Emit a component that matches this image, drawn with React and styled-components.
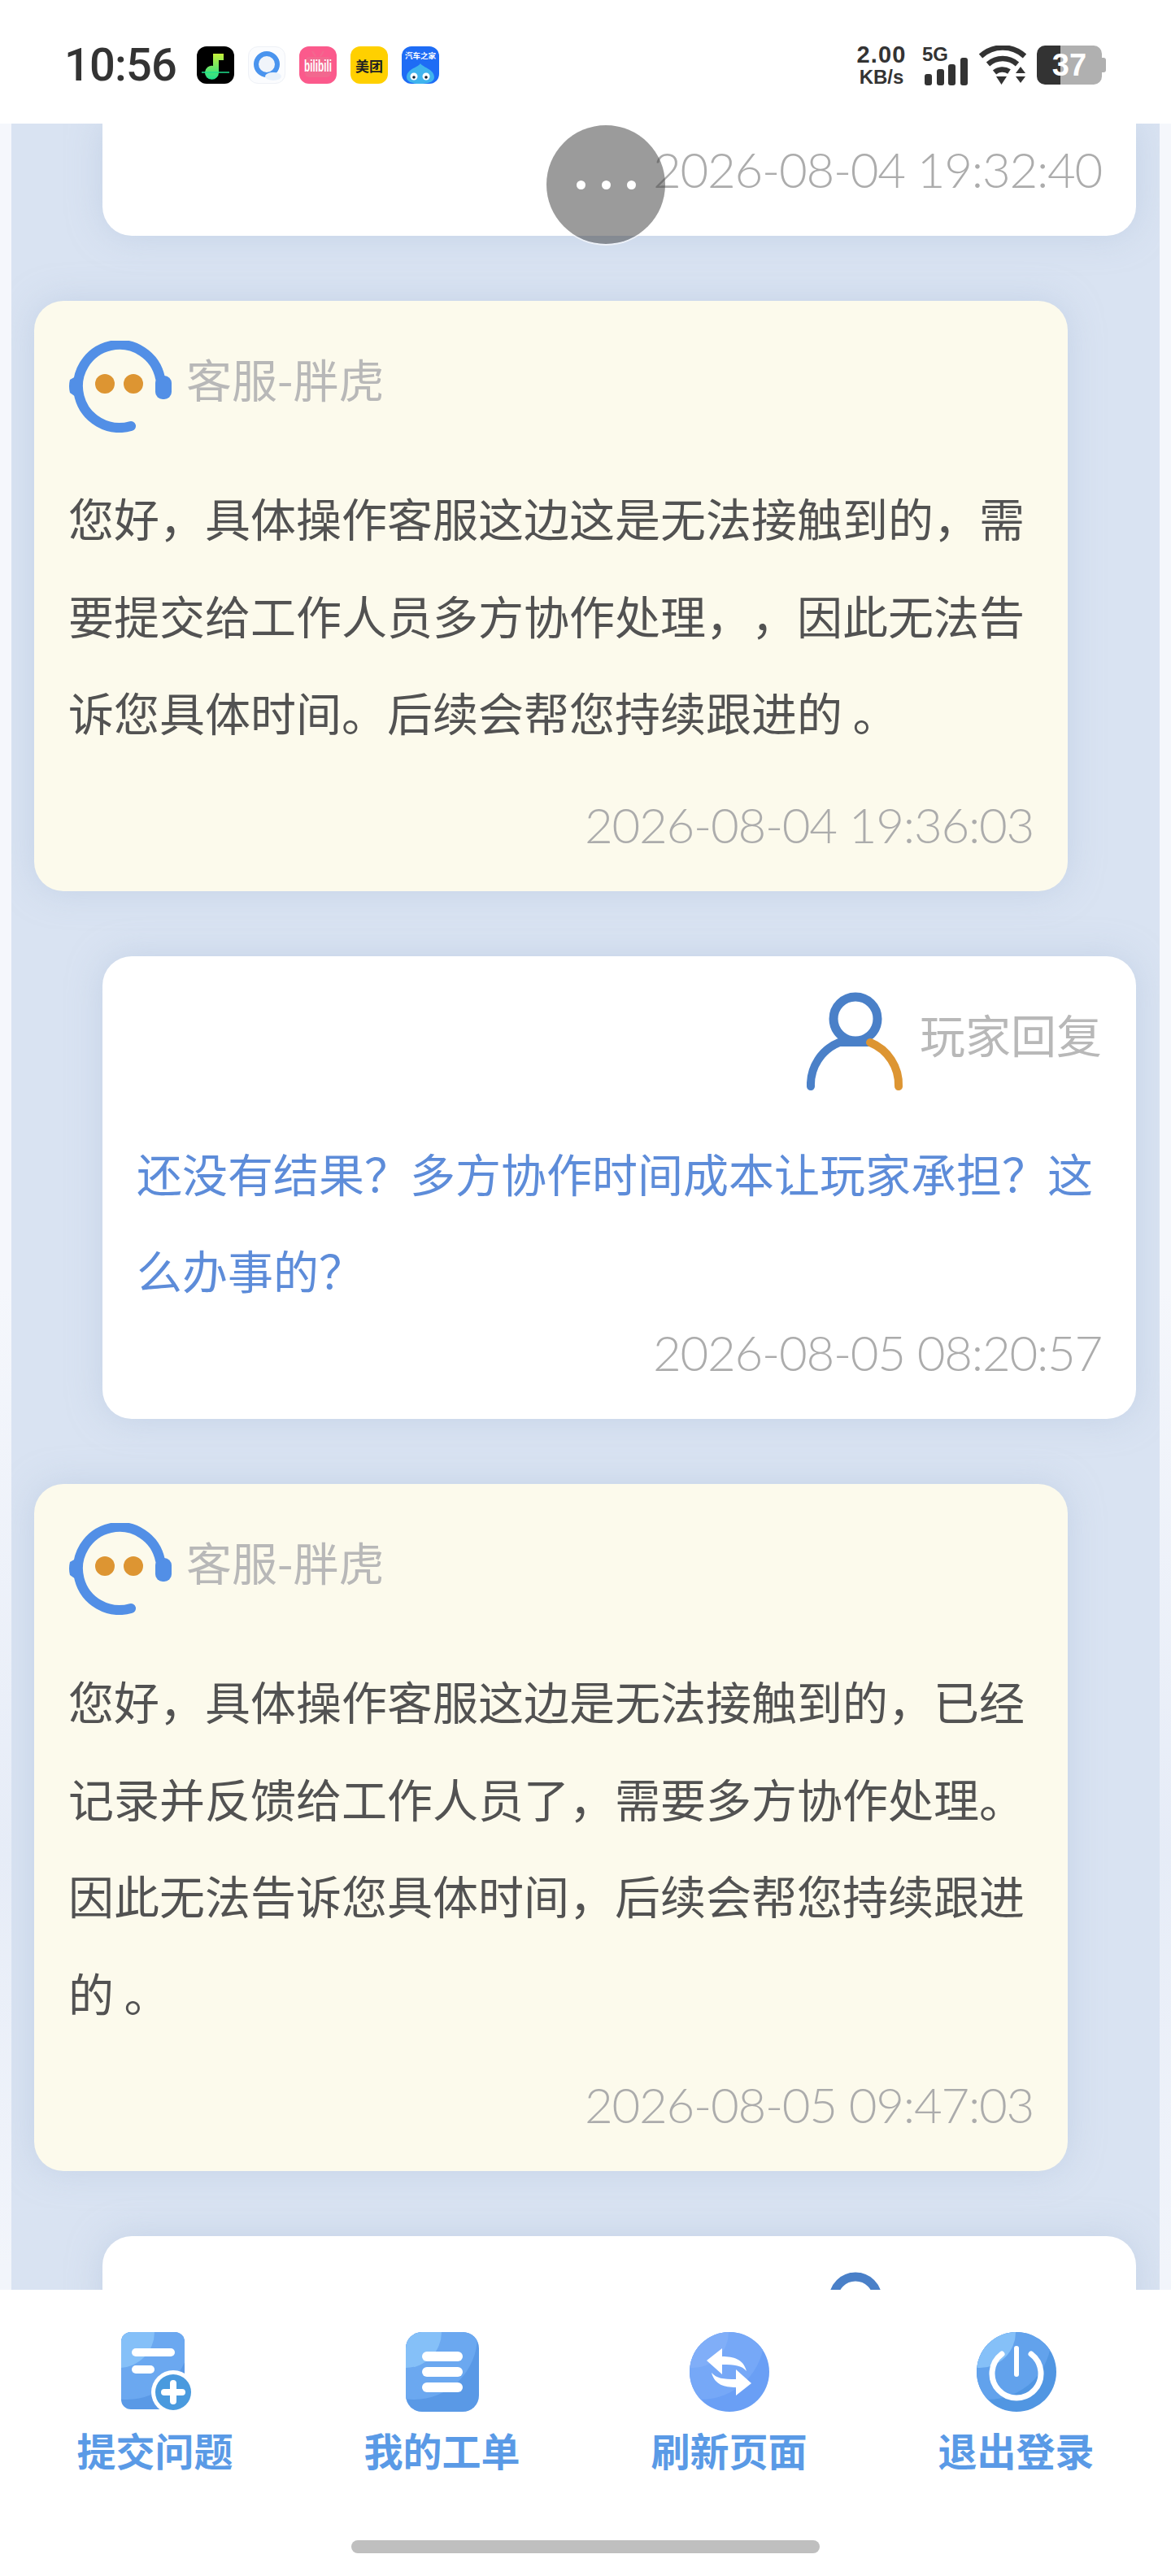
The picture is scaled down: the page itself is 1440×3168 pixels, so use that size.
import React from 'react'
import styled, { createGlobalStyle } from "styled-components";

const CJK = `"Noto Sans CJK SC", "Noto Sans", sans-serif`;
const DIGITS = `Lato, "Noto Sans CJK SC", sans-serif`;

const GlobalStyle = createGlobalStyle`
    html, body {
        margin: 0;
        padding: 0;
        background: #fff;
    }
`;

const Page = styled.div`
    width: 1440px;
    height: 3168px;
    display: flex;
    flex-direction: column;
    overflow: hidden;
    position: relative;
    background: linear-gradient(180deg, #f5f7fc 0, #f5f7fc 50%, #e6ecf7 72%, #f2f5fb 88%);
    font-family: ${CJK};
`;

const StatusBar = styled.div`
    height: 152px;
    flex-shrink: 0;
    background: #fff;
    display: flex;
    align-items: center;
    justify-content: space-between;
    padding: 8px 85px 0 79px;
    box-sizing: border-box;
`;

const StatusLeft = styled.div`
    display: flex;
    align-items: center;
`;

const Clock = styled.div`
    font-family: Roboto, sans-serif;
    font-weight: 500;
    font-size: 56px;
    line-height: 56px;
    color: #333;
    width: 163px;
    letter-spacing: -0.8px;
`;

const AppIcons = styled.div`
    display: flex;
    gap: 17px;
`;

const AppIcon = styled.div`
    width: 46px;
    height: 46px;
    border-radius: 12px;
    overflow: hidden;
    background: ${(p) => p.$bg};
    color: ${(p) => p.$fg || "#fff"};
    box-sizing: border-box;
    border: ${(p) => (p.$line ? "1px solid #eef1f6" : "none")};
    display: flex;
    align-items: center;
    justify-content: center;
    font-size: ${(p) => p.$size || 16}px;
    font-weight: 700;
    line-height: 1;
`;

const StatusRight = styled.div`
    display: flex;
    align-items: center;
`;

const Speed = styled.div`
    width: 62px;
    display: flex;
    flex-direction: column;
    align-items: center;
    font-family: "Liberation Sans", sans-serif;
    font-weight: 700;
    color: #333;
`;

const SpeedValue = styled.span`
    font-size: 29px;
    line-height: 28px;
    letter-spacing: 1.2px;
`;

const SpeedUnit = styled.span`
    font-size: 24px;
    line-height: 24px;
    margin-top: 2px;
`;

const Signal = styled.div`
    position: relative;
    width: 56px;
    height: 50px;
    margin-left: 19px;
`;

const SignalLabel = styled.span`
    position: absolute;
    left: 0;
    top: 0;
    font-family: "Liberation Sans", sans-serif;
    font-weight: 700;
    font-size: 24px;
    line-height: 24px;
    color: #333;
`;

const SignalBars = styled.svg`
    position: absolute;
    left: 3px;
    bottom: 0;
`;

const WifiIcon = styled.svg`
    margin-left: 13px;
    display: block;
`;

const Battery = styled.div`
    width: 80px;
    height: 48px;
    margin-left: 12px;
    border-radius: 10px;
    background: linear-gradient(90deg, #333 0, #333 29px, #b0b0b0 29px, #b0b0b0 100%);
    color: #fff;
    font-family: "Liberation Sans", sans-serif;
    font-weight: 700;
    font-size: 38px;
    line-height: 48px;
    text-align: center;
    position: relative;

    &::after {
        content: "";
        position: absolute;
        right: -5px;
        top: 15px;
        width: 5px;
        height: 18px;
        border-radius: 0 3px 3px 0;
        background: #b0b0b0;
    }
`;

const Feed = styled.div`
    flex: 1;
    min-height: 0;
    margin: 0 14px;
    overflow: hidden;
    display: flex;
    flex-direction: column;
    gap: 80px;
    background: #d9e3f2;
`;

const Card = styled.div`
    width: 1271px;
    box-sizing: border-box;
    flex-shrink: 0;
    padding: 45px 42px 20px;
    border-radius: 36px;
    align-self: ${(p) => (p.$staff ? "flex-start" : "flex-end")};
    margin: ${(p) => (p.$staff ? "0 0 0 28px" : "0 29px 0 0")};
    background: ${(p) => (p.$staff ? "#fcfaec" : "#fff")};
    box-shadow: 0 0 40px rgba(175, 193, 220, 0.5);
`;

const ClippedCard = styled(Card)`
    height: 138px;
    padding-top: 0;
    border-radius: 0 0 36px 36px;
    display: flex;
    flex-direction: column;
    justify-content: flex-end;
`;

const CardHead = styled.div`
    display: flex;
    align-items: center;
    justify-content: ${(p) => (p.$staff ? "flex-start" : "flex-end")};
    gap: ${(p) => (p.$staff ? 18 : 19)}px;
    height: 120px;
    margin-bottom: 41px;
`;

const HeadName = styled.span`
    font-size: 56px;
    line-height: 64px;
    margin-bottom: 20px;
    color: #b8b8b8;
    font-weight: 400;
`;

// the name of the last card lies under the tab bar, only its room is kept
const HeadNameRoom = styled.span`
    width: 224px;
`;

const Body = styled.div`
    font-size: 56px;
    line-height: 119.6px;
    text-spacing-trim: space-all;
    color: ${(p) => (p.$staff ? "#525252" : "#5d8cd9")};
`;

const Stamp = styled.div`
    font-family: ${DIGITS};
    font-weight: 300;
    font-size: 60px;
    letter-spacing: -1.3px;
    line-height: 80px;
    height: 102px;
    box-sizing: border-box;
    color: #acacac;
    text-align: right;
    margin-top: ${(p) => (p.$staff ? "39px" : "2px")};
`;

const FloatDots = styled.div`
    position: absolute;
    left: 672px;
    top: 154px;
    width: 146px;
    height: 146px;
    border-radius: 50%;
    background: rgba(70, 70, 70, 0.54);
    box-shadow: 0 2px 0 rgba(255, 255, 255, 0.6);
    display: flex;
    align-items: center;
    justify-content: center;
    gap: 20px;
`;

const Dot = styled.span`
    width: 11px;
    height: 11px;
    border-radius: 50%;
    background: #fff;
`;

const TabBar = styled.div`
    height: 352px;
    flex-shrink: 0;
    background: #fff;
    box-sizing: border-box;
    padding: 52px 14px 0;
    display: grid;
    grid-template-columns: repeat(4, 1fr);
    position: relative;
    z-index: 1;
`;

const Tab = styled.div`
    display: flex;
    flex-direction: column;
    align-items: center;
`;

const TabIcon = styled.svg`
    display: block;
    width: 100px;
    height: 100px;
`;

const TabLabel = styled.span`
    font-size: 48px;
    line-height: 48px;
    margin-top: 20px;
    font-weight: 700;
    color: #5a9ae6;
`;

const HomeBar = styled.div`
    position: absolute;
    left: 432px;
    top: 308px;
    width: 576px;
    height: 16px;
    border-radius: 8px;
    background: #bfbfbf;
`;

const MusicIcon = () => (
    <svg width="46" height="46" viewBox="0 0 46 46">
        <defs>
            <linearGradient id="noteFill" x1="0" y1="0" x2="0" y2="1">
                <stop offset="0" stopColor="#c6f03a" />
                <stop offset="1" stopColor="#1ee08e" />
            </linearGradient>
        </defs>
        <path d="M20 9h13v8h-6v15a8.500 8.500 0 1 1-7-8z" fill="url(#noteFill)" />
        <path d="M6 32h34" stroke="#1ee08e" strokeWidth="1.5" />
    </svg>
);

const BrowserIcon = () => (
    <svg width="44" height="44" viewBox="0 0 44 44">
        <circle cx="22" cy="21" r="13" fill="#f0f4fa" stroke="#4a94ee" strokeWidth="6" />
        <ellipse cx="30" cy="36" rx="10" ry="5" fill="#eaf2fb" />
    </svg>
);

const BiliIcon = () => (
    <svg width="46" height="46" viewBox="0 0 46 46">
        <rect x="7" y="13" width="32" height="25" rx="5" fill="#f2688f" />
        <path d="M16 6l4 6M30 6l-4 6" stroke="#f2688f" strokeWidth="2" />
        <text transform="translate(6 31) scale(0.84 1.45)" fontSize="14" fontWeight="700" fill="#fff" fontFamily="Liberation Sans, sans-serif">bilibili</text>
    </svg>
);

const HomeIcon = () => (
    <svg width="46" height="46" viewBox="0 0 46 46">
        <text x="23" y="15" textAnchor="middle" fontSize="9.500" fontWeight="700" fill="#fff" fontFamily="Noto Sans CJK SC, sans-serif">汽车之家</text>
        <path d="M23 21c3 5 17 7 17 17 0 6-8 8-17 8S6 44 6 38c0-10 14-12 17-17z" fill="#3fb4ee" />
        <circle cx="15" cy="37" r="4.500" fill="#fff" />
        <circle cx="30" cy="37" r="4.500" fill="#fff" />
        <circle cx="15" cy="38" r="1.800" fill="#123" />
        <circle cx="30" cy="38" r="1.800" fill="#123" />
    </svg>
);

const StaffAvatar = () => (
    <svg width="127" height="113" viewBox="0 0 127 113" style={{ flexShrink: 0 }}>
        <path d="M113 46A51 51 0 1 0 77 105" fill="none" stroke="#528fe6" strokeWidth="12" strokeLinecap="round" />
        <path d="M16 40L2 48Q0 56 2 64L16 74z" fill="#528fe6" />
        <rect x="107" y="43" width="20" height="29" rx="9" fill="#528fe6" />
        <circle cx="45" cy="53" r="12" fill="#dd9532" />
        <circle cx="80" cy="53" r="12" fill="#dd9532" />
    </svg>
);

const PlayerAvatar = () => (
    <svg width="120" height="122" viewBox="0 0 120 122" style={{ flexShrink: 0 }}>
        <circle cx="60" cy="33" r="27" fill="none" stroke="#4a80c8" strokeWidth="11" />
        <path d="M5 116A56 56 0 0 1 40 62" fill="none" stroke="#4a80c8" strokeWidth="10" strokeLinecap="round" />
        <path d="M40 62H78" stroke="#4a80c8" strokeWidth="10" />
        <path d="M78 62A56 56 0 0 1 113 116" fill="none" stroke="#dd9532" strokeWidth="10" strokeLinecap="round" />
    </svg>
);

// three flat facets from the top-left corner, same on all the blue tab icons
const Facets = ({ id, children, base, mid, light }) => (
    <>
        <defs>
            <clipPath id={id}>{children}</clipPath>
        </defs>
        <g clipPath={`url(#${id})`}>
            <rect width="100" height="100" fill={base} />
            <circle cx="15" cy="5" r="78" fill={mid} />
            <circle cx="5" cy="0" r="44" fill={light} />
        </g>
    </>
);

const SubmitGlyph = () => (
    <TabIcon viewBox="0 0 100 100">
        <Facets id="facetDoc" base="#5a99e6" mid="#6ba8f0" light="#85c0f8">
            <rect x="8" y="0" width="78" height="95" rx="12" />
        </Facets>
        <rect x="21" y="20" width="53" height="10" rx="5" fill="#fff" />
        <rect x="21" y="41" width="28" height="10" rx="5" fill="#fff" />
        <circle cx="72" cy="74" r="27" fill="#fff" />
        <circle cx="72" cy="74" r="22" fill="#4a9ade" />
        <path d="M72 63v22M61 74h22" stroke="#fff" strokeWidth="8" strokeLinecap="round" />
    </TabIcon>
);

const ListGlyph = () => (
    <TabIcon viewBox="0 0 100 100">
        <Facets id="facetList" base="#5a99e6" mid="#6ba8f0" light="#85c0f8">
            <rect x="5" y="0" width="90" height="98" rx="20" />
        </Facets>
        <rect x="25" y="24" width="50" height="12" rx="6" fill="#fff" />
        <rect x="25" y="43" width="50" height="12" rx="6" fill="#fff" />
        <rect x="25" y="62" width="50" height="12" rx="6" fill="#fff" />
    </TabIcon>
);

const RefreshGlyph = () => (
    <TabIcon viewBox="0 0 100 100">
        <Facets id="facetRound" base="#6a9ff5" mid="#76a8f7" light="#80aef8">
            <circle cx="50" cy="49" r="49" />
        </Facets>
        <path d="M22 35L41 20v10c14 0 26 3 30 18-6-7-14-8-30-8v12z" fill="#fff" />
        <path d="M77 63L58 78V68c-14 0-26-3-30-18 6 7 14 8 30 8V46z" fill="#fff" />
    </TabIcon>
);

const PowerGlyph = () => (
    <TabIcon viewBox="0 0 100 100">
        <Facets id="facetPower" base="#5196e2" mid="#62a2ec" light="#85c0f8">
            <circle cx="50" cy="49" r="49" />
        </Facets>
        <path d="M32 27A30 30 0 1 0 68 27" fill="none" stroke="#fff" strokeWidth="7" strokeLinecap="round" />
        <path d="M50 20v32" stroke="#fff" strokeWidth="6" strokeLinecap="round" />
    </TabIcon>
);

const tabs = [
    { label: "提交问题", Glyph: SubmitGlyph },
    { label: "我的工单", Glyph: ListGlyph },
    { label: "刷新页面", Glyph: RefreshGlyph },
    { label: "退出登录", Glyph: PowerGlyph },
];

const App = () => {
    return (
        <Page>
            <GlobalStyle />
            <StatusBar>
                <StatusLeft>
                    <Clock>10:56</Clock>
                    <AppIcons>
                        <AppIcon $bg="#000"><MusicIcon /></AppIcon>
                        <AppIcon $bg="#fbfcfe" $line><BrowserIcon /></AppIcon>
                        <AppIcon $bg="#fb5a8c"><BiliIcon /></AppIcon>
                        <AppIcon $bg="#ffd000" $fg="#222" $size={17}>美团</AppIcon>
                        <AppIcon $bg="#1e6cf5"><HomeIcon /></AppIcon>
                    </AppIcons>
                </StatusLeft>
                <StatusRight>
                    <Speed>
                        <SpeedValue>2.00</SpeedValue>
                        <SpeedUnit>KB/s</SpeedUnit>
                    </Speed>
                    <Signal>
                        <SignalLabel>5G</SignalLabel>
                        <SignalBars width="53" height="34" viewBox="0 0 53 34">
                            <rect x="0" y="20" width="9" height="14" rx="3" fill="#333" />
                            <rect x="15" y="14" width="9" height="20" rx="3" fill="#333" />
                            <rect x="29" y="8" width="9" height="26" rx="3" fill="#333" />
                            <rect x="44" y="0" width="9" height="34" rx="3" fill="#333" />
                        </SignalBars>
                    </Signal>
                    <WifiIcon width="60" height="48" viewBox="0 0 60 48">
                        <path d="M3 13a40 40 0 0 1 54 0" fill="none" stroke="#333" strokeWidth="6.500" />
                        <path d="M12 23a27 27 0 0 1 36 0" fill="none" stroke="#333" strokeWidth="6.500" />
                        <path d="M20 33a15 15 0 0 1 18-1" fill="none" stroke="#333" strokeWidth="6.500" />
                        <path d="M22 38h13l-6.500 10zM46 34l6-8 6 8zM46 38h12l-6 8z" fill="#333" />
                    </WifiIcon>
                    <Battery>37</Battery>
                </StatusRight>
            </StatusBar>

            <Feed>
                <ClippedCard>
                    <Stamp>2026-08-04 19:32:40</Stamp>
                </ClippedCard>

                <Card $staff>
                    <CardHead $staff>
                        <StaffAvatar />
                        <HeadName>客服-胖虎</HeadName>
                    </CardHead>
                    <Body $staff>您好，具体操作客服这边这是无法接触到的，需要提交给工作人员多方协作处理，，因此无法告诉您具体时间。后续会帮您持续跟进的 。</Body>
                    <Stamp $staff>2026-08-04 19:36:03</Stamp>
                </Card>

                <Card>
                    <CardHead>
                        <PlayerAvatar />
                        <HeadName>玩家回复</HeadName>
                    </CardHead>
                    <Body>还没有结果？多方协作时间成本让玩家承担？这么办事的？</Body>
                    <Stamp>2026-08-05 08:20:57</Stamp>
                </Card>

                <Card $staff>
                    <CardHead $staff>
                        <StaffAvatar />
                        <HeadName>客服-胖虎</HeadName>
                    </CardHead>
                    <Body $staff>您好，具体操作客服这边是无法接触到的，已经记录并反馈给工作人员了，需要多方协作处理。因此无法告诉您具体时间，后续会帮您持续跟进的 。</Body>
                    <Stamp $staff>2026-08-05 09:47:03</Stamp>
                </Card>

                <Card>
                    <CardHead>
                        <PlayerAvatar />
                        <HeadNameRoom />
                    </CardHead>
                </Card>
            </Feed>

            <FloatDots><Dot /><Dot /><Dot /></FloatDots>

            <TabBar>
                {tabs.map(({ label, Glyph }) => (
                    <Tab key={label}>
                        <Glyph />
                        <TabLabel>{label}</TabLabel>
                    </Tab>
                ))}
                <HomeBar />
            </TabBar>
        </Page>
    )
}

export default App;
